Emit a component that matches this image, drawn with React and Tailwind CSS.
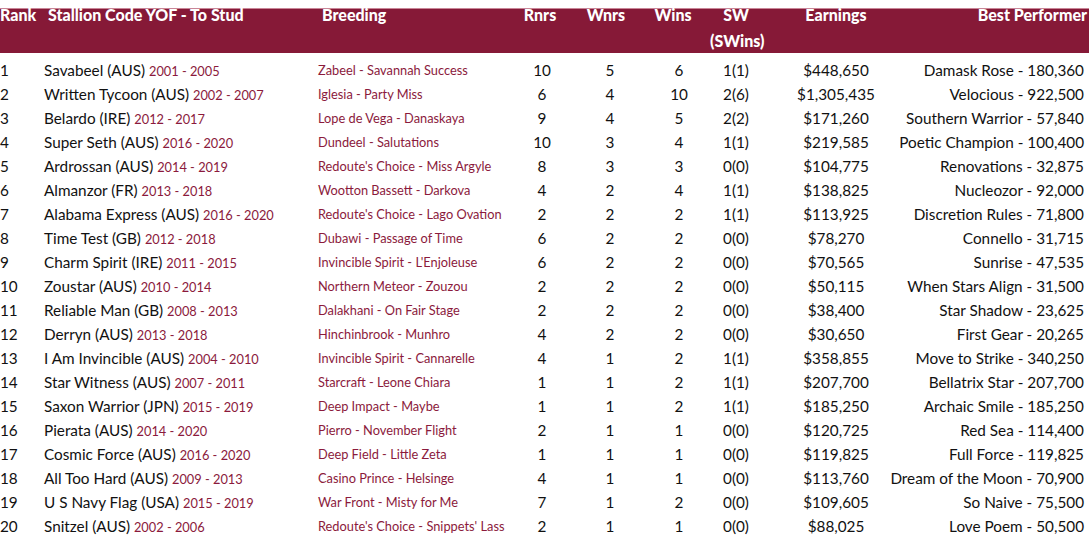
import React from "react";

const rows = [
  ["1", "Savabeel (AUS)", "2001 - 2005", "Zabeel - Savannah Success", "10", "5", "6", "1(1)", "$448,650", "Damask Rose - 180,360"],
  ["2", "Written Tycoon (AUS)", "2002 - 2007", "Iglesia - Party Miss", "6", "4", "10", "2(6)", "$1,305,435", "Velocious - 922,500"],
  ["3", "Belardo (IRE)", "2012 - 2017", "Lope de Vega - Danaskaya", "9", "4", "5", "2(2)", "$171,260", "Southern Warrior - 57,840"],
  ["4", "Super Seth (AUS)", "2016 - 2020", "Dundeel - Salutations", "10", "3", "4", "1(1)", "$219,585", "Poetic Champion - 100,400"],
  ["5", "Ardrossan (AUS)", "2014 - 2019", "Redoute's Choice - Miss Argyle", "8", "3", "3", "0(0)", "$104,775", "Renovations - 32,875"],
  ["6", "Almanzor (FR)", "2013 - 2018", "Wootton Bassett - Darkova", "4", "2", "4", "1(1)", "$138,825", "Nucleozor - 92,000"],
  ["7", "Alabama Express (AUS)", "2016 - 2020", "Redoute's Choice - Lago Ovation", "2", "2", "2", "1(1)", "$113,925", "Discretion Rules - 71,800"],
  ["8", "Time Test (GB)", "2012 - 2018", "Dubawi - Passage of Time", "6", "2", "2", "0(0)", "$78,270", "Connello - 31,715"],
  ["9", "Charm Spirit (IRE)", "2011 - 2015", "Invincible Spirit - L'Enjoleuse", "6", "2", "2", "0(0)", "$70,565", "Sunrise - 47,535"],
  ["10", "Zoustar (AUS)", "2010 - 2014", "Northern Meteor - Zouzou", "2", "2", "2", "0(0)", "$50,115", "When Stars Align - 31,500"],
  ["11", "Reliable Man (GB)", "2008 - 2013", "Dalakhani - On Fair Stage", "2", "2", "2", "0(0)", "$38,400", "Star Shadow - 23,625"],
  ["12", "Derryn (AUS)", "2013 - 2018", "Hinchinbrook - Munhro", "4", "2", "2", "0(0)", "$30,650", "First Gear - 20,265"],
  ["13", "I Am Invincible (AUS)", "2004 - 2010", "Invincible Spirit - Cannarelle", "4", "1", "2", "1(1)", "$358,855", "Move to Strike - 340,250"],
  ["14", "Star Witness (AUS)", "2007 - 2011", "Starcraft - Leone Chiara", "1", "1", "2", "1(1)", "$207,700", "Bellatrix Star - 207,700"],
  ["15", "Saxon Warrior (JPN)", "2015 - 2019", "Deep Impact - Maybe", "1", "1", "2", "1(1)", "$185,250", "Archaic Smile - 185,250"],
  ["16", "Pierata (AUS)", "2014 - 2020", "Pierro - November Flight", "2", "1", "1", "0(0)", "$120,725", "Red Sea - 114,400"],
  ["17", "Cosmic Force (AUS)", "2016 - 2020", "Deep Field - Little Zeta", "1", "1", "1", "0(0)", "$119,825", "Full Force - 119,825"],
  ["18", "All Too Hard (AUS)", "2009 - 2013", "Casino Prince - Helsinge", "4", "1", "1", "0(0)", "$113,760", "Dream of the Moon - 70,900"],
  ["19", "U S Navy Flag (USA)", "2015 - 2019", "War Front - Misty for Me", "7", "1", "2", "0(0)", "$109,605", "So Naive - 75,500"],
  ["20", "Snitzel (AUS)", "2002 - 2006", "Redoute's Choice - Snippets' Lass", "2", "1", "1", "0(0)", "$88,025", "Love Poem - 50,500"],
];

const cols = "grid grid-cols-[44px_274px_194px_60px_76px_62px_52px_148px_174px]";

export default function App() {
  return (
    <div
      className="w-[1089px] h-[555px] bg-white text-[#111] overflow-hidden"
      style={{ fontFamily: "Lato, 'Open Sans', sans-serif" }}
    >
      <div className="mt-[8px] h-[45px] bg-[#861937] text-white font-black text-[16px] leading-[26px] border-t border-[#c98597]">
        <div className={`${cols} -mt-[7px]`}>
          <div className="whitespace-nowrap">Rank</div>
          <div className="pl-[4px] whitespace-nowrap">Stallion Code YOF - To Stud</div>
          <div className="pl-[4px]">Breeding</div>
          <div className="text-center pr-[4px]">Rnrs</div>
          <div className="text-center pr-[8px]">Wnrs</div>
          <div className="text-center pr-[12px]">Wins</div>
          <div className="text-center whitespace-nowrap">
            SW
            <br />
            (SWins)
          </div>
          <div className="text-center">Earnings</div>
          <div className="flex justify-end -mr-[3px] whitespace-nowrap">
            <span>Best Performer</span>
          </div>
        </div>
      </div>
      <div className="mt-[5px]">
        {rows.map((r) => (
          <div key={r[0]} className={`${cols} h-[24px] items-center text-[15.3px]`}>
            <div>{r[0]}</div>
            <div className="whitespace-nowrap">
              {r[1]} <span className="text-[12.8px] text-[#8b1a3c]">{r[2]}</span>
            </div>
            <div className="pt-[2px] text-[12.8px] text-[#8b1a3c] whitespace-nowrap">{r[3]}</div>
            <div className="text-center">{r[4]}</div>
            <div className="text-center">{r[5]}</div>
            <div className="text-center">{r[6]}</div>
            <div className="text-center">{r[7]}</div>
            <div className="text-center">{r[8]}</div>
            <div className="flex justify-end whitespace-nowrap">
              <span>{r[9]}</span>
            </div>
          </div>
        ))}
      </div>
    </div>
  );
}
